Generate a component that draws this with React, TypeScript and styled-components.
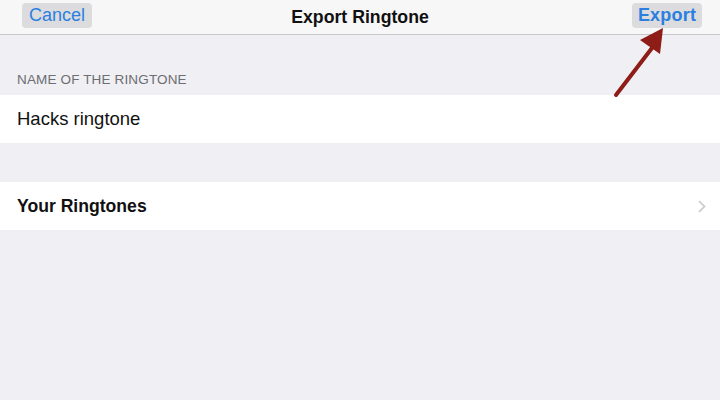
import styled, { createGlobalStyle } from "styled-components"

const Global = createGlobalStyle`
  html, body { margin: 0; padding: 0; }
  body {
    width: 720px;
    height: 400px;
    overflow: hidden;
    background: #efeff4;
    font-family: "Liberation Sans", Arial, sans-serif;
    -webkit-font-smoothing: antialiased;
  }
`

const Page = styled.div`
  position: relative;
  width: 720px;
  height: 400px;
  background: #efeff4;
`

const NavBar = styled.div`
  height: 31px;
  background: #f7f7f7;
  border-bottom: 1px solid #c8c7cc;
  display: flex;
  align-items: flex-start;
  justify-content: space-between;
  padding: 3px 18px 0 22px;
  box-sizing: content-box;
  position: relative;
`

const NavButton = styled.div<{ $bold?: boolean }>`
  height: 25px;
  width: 70px;
  box-sizing: border-box;
  display: flex;
  align-items: center;
  justify-content: center;
  background: #dcdcde;
  border-radius: 4px;
  color: #2a7fe0;
  font-size: 18px;
  font-weight: ${(p) => (p.$bold ? 700 : 400)};
  letter-spacing: ${(p) => (p.$bold ? "0.2px" : "0")};
`

const Title = styled.div`
  position: absolute;
  left: 0;
  right: 0;
  top: 7px;
  text-align: center;
  font-size: 17.7px;
  font-weight: 700;
  color: #111;
  pointer-events: none;
`

const SectionHeader = styled.div`
  padding: 37px 17px 0;
  height: 60px;
  box-sizing: border-box;
  font-size: 13.5px;
  color: #6d6d72;
  letter-spacing: 0.15px;
`

const Row = styled.div<{ $bold?: boolean }>`
  height: 48px;
  background: #fff;
  display: flex;
  align-items: center;
  justify-content: space-between;
  padding: 0 14px 0 17px;
  font-size: ${(p) => (p.$bold ? "17.6px" : "18.5px")};
  font-weight: ${(p) => (p.$bold ? 700 : 400)};
  color: #111;
`

const Spacer = styled.div`
  height: 39px;
`

const Chevron = styled.svg`
  width: 8px;
  height: 13px;
`

const Arrow = styled.svg`
  position: absolute;
  left: 608px;
  top: 24px;
  width: 70px;
  height: 80px;
`

export default function App() {
  return (
    <>
      <Global />
      <Page>
        <NavBar>
          <NavButton>Cancel</NavButton>
          <Title>Export Ringtone</Title>
          <NavButton $bold>Export</NavButton>
        </NavBar>
        <SectionHeader>NAME OF THE RINGTONE</SectionHeader>
        <Row>Hacks ringtone</Row>
        <Spacer />
        <Row $bold>
          Your Ringtones
          <Chevron viewBox="0 0 8 13">
            <path d="M1 1 L6.5 6.5 L1 12" fill="none" stroke="#c7c7cc" strokeWidth="1.6" />
          </Chevron>
        </Row>
        <Arrow viewBox="0 0 70 80">
          <line x1="8" y1="71" x2="44" y2="24" stroke="#8e1c17" strokeWidth="4" strokeLinecap="round" />
          <polygon points="55,4 32,16 52,30" fill="#8e1c17" />
        </Arrow>
      </Page>
    </>
  )
}
